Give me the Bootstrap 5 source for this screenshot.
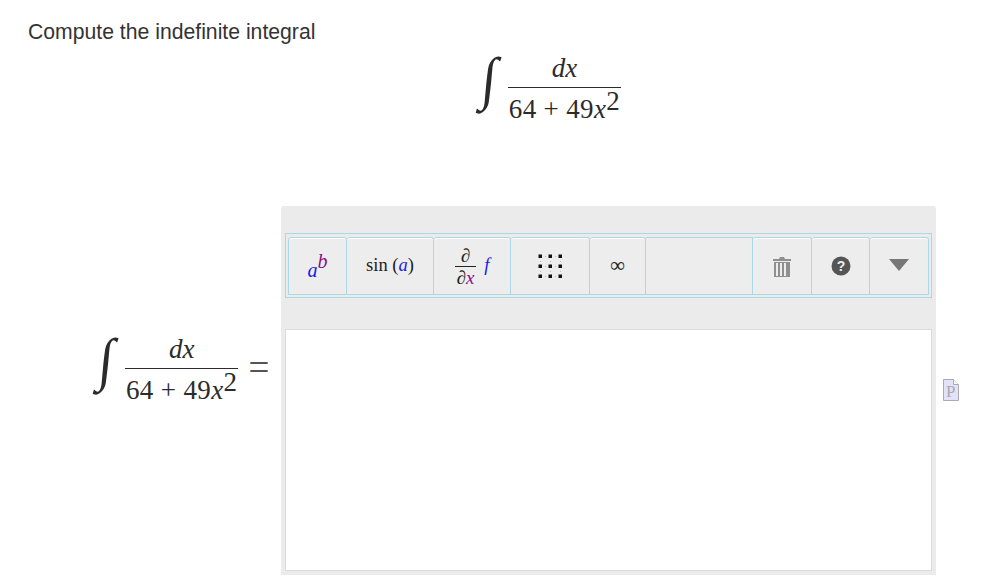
<!DOCTYPE html>
<html lang="en">
<head>
  <meta charset="UTF-8" />
  <meta name="viewport" content="width=device-width, initial-scale=1.0"/>
  <title>Indefinite integral</title>
  <link href="https://cdn.jsdelivr.net/npm/bootstrap@5.3.3/dist/css/bootstrap.min.css" rel="stylesheet">
  <style>
    html, body { height: 588px; overflow: hidden; }
    body {
      background: #fff;
      color: #333;
      font-family: "Liberation Sans", Arial, sans-serif;
    }

    .question { font-size: 21.2px; line-height: 24px; padding: 20px 0 0 28px; margin: 0; }

    /* math */
    .math { font-family: "Liberation Serif", "Times New Roman", serif; color: #2b2b2b; font-size: 27px; line-height: 32px; }
    .math i { font-style: italic; }
    .math-top { height: 162px; padding-left: 109px; }
    .int-sign { font-size: 54px; line-height: 70px; width: 29px; padding-left: 3px; font-weight: 400; transform: scaleY(1.08) skewX(-6deg); }
    .frac-top { height: 43px; padding-top: 8px; }
    .frac-bar { border-top: 1px solid #2b2b2b; padding: 5px 1px 0; white-space: nowrap; letter-spacing: .35px; }
    .frac-bar sup { font-size: 27px; top: -8px; line-height: 0; vertical-align: baseline; position: relative; }
    .eq-sign { font-size: 37px; line-height: 32px; margin: 27px 0 0 10px; color: #555; }

    .answer-row { padding-left: 96px; }
    .math-left { margin-top: 119px; width: 185px; flex: none; }
    .panel-box { margin-top: 0; }

    /* editor panel */
    .panel-box { width: 655px; height: 369px; background: #ebebeb; border-radius: 3px 3px 0 0; padding: 27px 4px 4px; flex: none; }
    .tool-wrap { border: 1px solid #acd8e6; padding: 3px 2px 0; height: 65px; margin-bottom: 31px; width: 647px; }
    .tool-btn {
      height: 58px;
      flex: none;
      border: 1px solid #acd8e6;
      border-left-width: 0;
      background: #ededed;
      box-shadow: inset 0 1px 0 #fff;
      border-radius: 3px 3px 0 0;
      font-family: "Liberation Serif", serif;
      font-size: 18.500px;
      color: #222;
      padding: 0;
    }
    .tool-btn:first-child { border-left-width: 1px; }
    .tool-spacer { box-shadow: none; border-radius: 0; }
    .w59 { width: 59px; }
    .w58 { width: 58px; }
    .w87 { width: 87px; }
    .w77 { width: 77px; }
    .w79 { width: 79px; }
    .w56 { width: 56px; }
    .w107 { width: 107px; }
    .c-blue { color: #1a1ae6; }
    .c-purple { color: #8a0f8a; }
    .ab-a { font-size: 20px; font-style: italic; position: relative; top: 4px; }
    .ab-b { font-size: 20px; font-style: italic; position: relative; top: -5px; }
    .mini-frac { line-height: 21px; font-size: 19px; }
    .mini-frac span { display: block; }
    .mini-frac .mini-bot { border-top: 1px solid #222; padding: 0 2px; }
    .inf-glyph { font-size: 21px; }
    .edit-area { width: 647px; height: 242px; background: #fff; border: 1px solid #dcdcdc; }
    .side-icon { margin: 173px 0 0 7px; }
  </style>
</head>
<body>

  <p class="question">Compute the indefinite integral</p>

  <div class="math math-top d-flex justify-content-center">
    <div class="d-flex align-items-start">
      <div class="int-sign">∫</div>
      <div class="text-center">
        <div class="frac-top"><i>dx</i></div>
        <div class="frac-bar">64 + 49<i>x</i><sup>2</sup></div>
      </div>
    </div>
  </div>

  <div class="answer-row d-flex align-items-start">
    <div class="math math-left d-flex align-items-start">
      <div class="int-sign">∫</div>
      <div class="text-center">
        <div class="frac-top"><i>dx</i></div>
        <div class="frac-bar">64 + 49<i>x</i><sup>2</sup></div>
      </div>
      <div class="eq-sign">=</div>
    </div>

    <div class="panel-box">
      <div class="tool-wrap d-flex">
        <button type="button" class="tool-btn w59"><span class="ab-a c-blue">a</span><span class="ab-b c-purple">b</span></button>
        <button type="button" class="tool-btn w87">sin (<i class="c-blue">a</i>)</button>
        <button type="button" class="tool-btn w77 d-flex align-items-center justify-content-center gap-2">
          <span class="mini-frac text-center"><span>∂</span><span class="mini-bot">∂<i class="c-purple">x</i></span></span>
          <i class="c-blue">f</i>
        </button>
        <button type="button" class="tool-btn w79 d-flex align-items-center justify-content-center">
          <svg width="26" height="26" viewBox="0 0 26 26">
            <g fill="#111">
              <rect x="1.500" y="1.500" width="3.500" height="3.500"/><rect x="11.500" y="1.500" width="3.500" height="3.500"/><rect x="21.500" y="1.500" width="3.500" height="3.500"/>
              <rect x="1.500" y="11.500" width="3.500" height="3.500"/><rect x="11.500" y="11.500" width="3.500" height="3.500"/><rect x="21.500" y="11.500" width="3.500" height="3.500"/>
              <rect x="1.500" y="21.500" width="3.500" height="3.500"/><rect x="11.500" y="21.500" width="3.500" height="3.500"/><rect x="21.500" y="21.500" width="3.500" height="3.500"/>
            </g>
            <g fill="#bbb">
              <rect x="8" y="3" width="1" height="1"/><rect x="18" y="3" width="1" height="1"/>
              <rect x="8" y="13" width="1" height="1"/><rect x="18" y="13" width="1" height="1"/>
              <rect x="8" y="23" width="1" height="1"/><rect x="18" y="23" width="1" height="1"/>
              <rect x="3" y="8" width="1" height="1"/><rect x="13" y="8" width="1" height="1"/><rect x="23" y="8" width="1" height="1"/>
              <rect x="3" y="18" width="1" height="1"/><rect x="13" y="18" width="1" height="1"/><rect x="23" y="18" width="1" height="1"/>
            </g>
          </svg>
        </button>
        <button type="button" class="tool-btn w56"><span class="inf-glyph">∞</span></button>
        <div class="tool-btn tool-spacer w107"></div>
        <button type="button" class="tool-btn w59 d-flex align-items-center justify-content-center">
          <svg width="18" height="21" viewBox="0 0 18 21">
            <path fill="#8f8f8f" d="M0 3h6l1-2h4l1 2h6v2H0z"/>
            <path fill="#8f8f8f" d="M1 6h16v15H1zM3 7v13h2V7zm4 0v13h2V7zm4 0v13h2V7z" fill-rule="evenodd"/>
          </svg>
        </button>
        <button type="button" class="tool-btn w58 d-flex align-items-center justify-content-center">
          <svg width="20" height="20" viewBox="0 0 20 20">
            <circle cx="10" cy="10" r="9.500" fill="#555"/>
            <text x="10" y="15" text-anchor="middle" fill="#eee" font-family="Liberation Sans" font-weight="700" font-size="14">?</text>
          </svg>
        </button>
        <button type="button" class="tool-btn w59 d-flex align-items-center justify-content-center">
          <svg width="20" height="14" viewBox="0 0 20 14"><path fill="#777" d="M0 0h20L10 12z"/></svg>
        </button>
      </div>
      <div class="edit-area"></div>
    </div>

    <svg class="side-icon" width="16" height="22" viewBox="0 0 16 22">
      <path d="M.5.5h10l5 5v16H.5z" fill="#e2e2fa" stroke="#aaa"/>
      <path d="M10.500.5v5h5" fill="#fff" stroke="#aaa"/>
      <text x="3" y="18" font-family="Liberation Serif" font-size="17" fill="#aaa">P</text>
    </svg>
  </div>

</body>
</html>
